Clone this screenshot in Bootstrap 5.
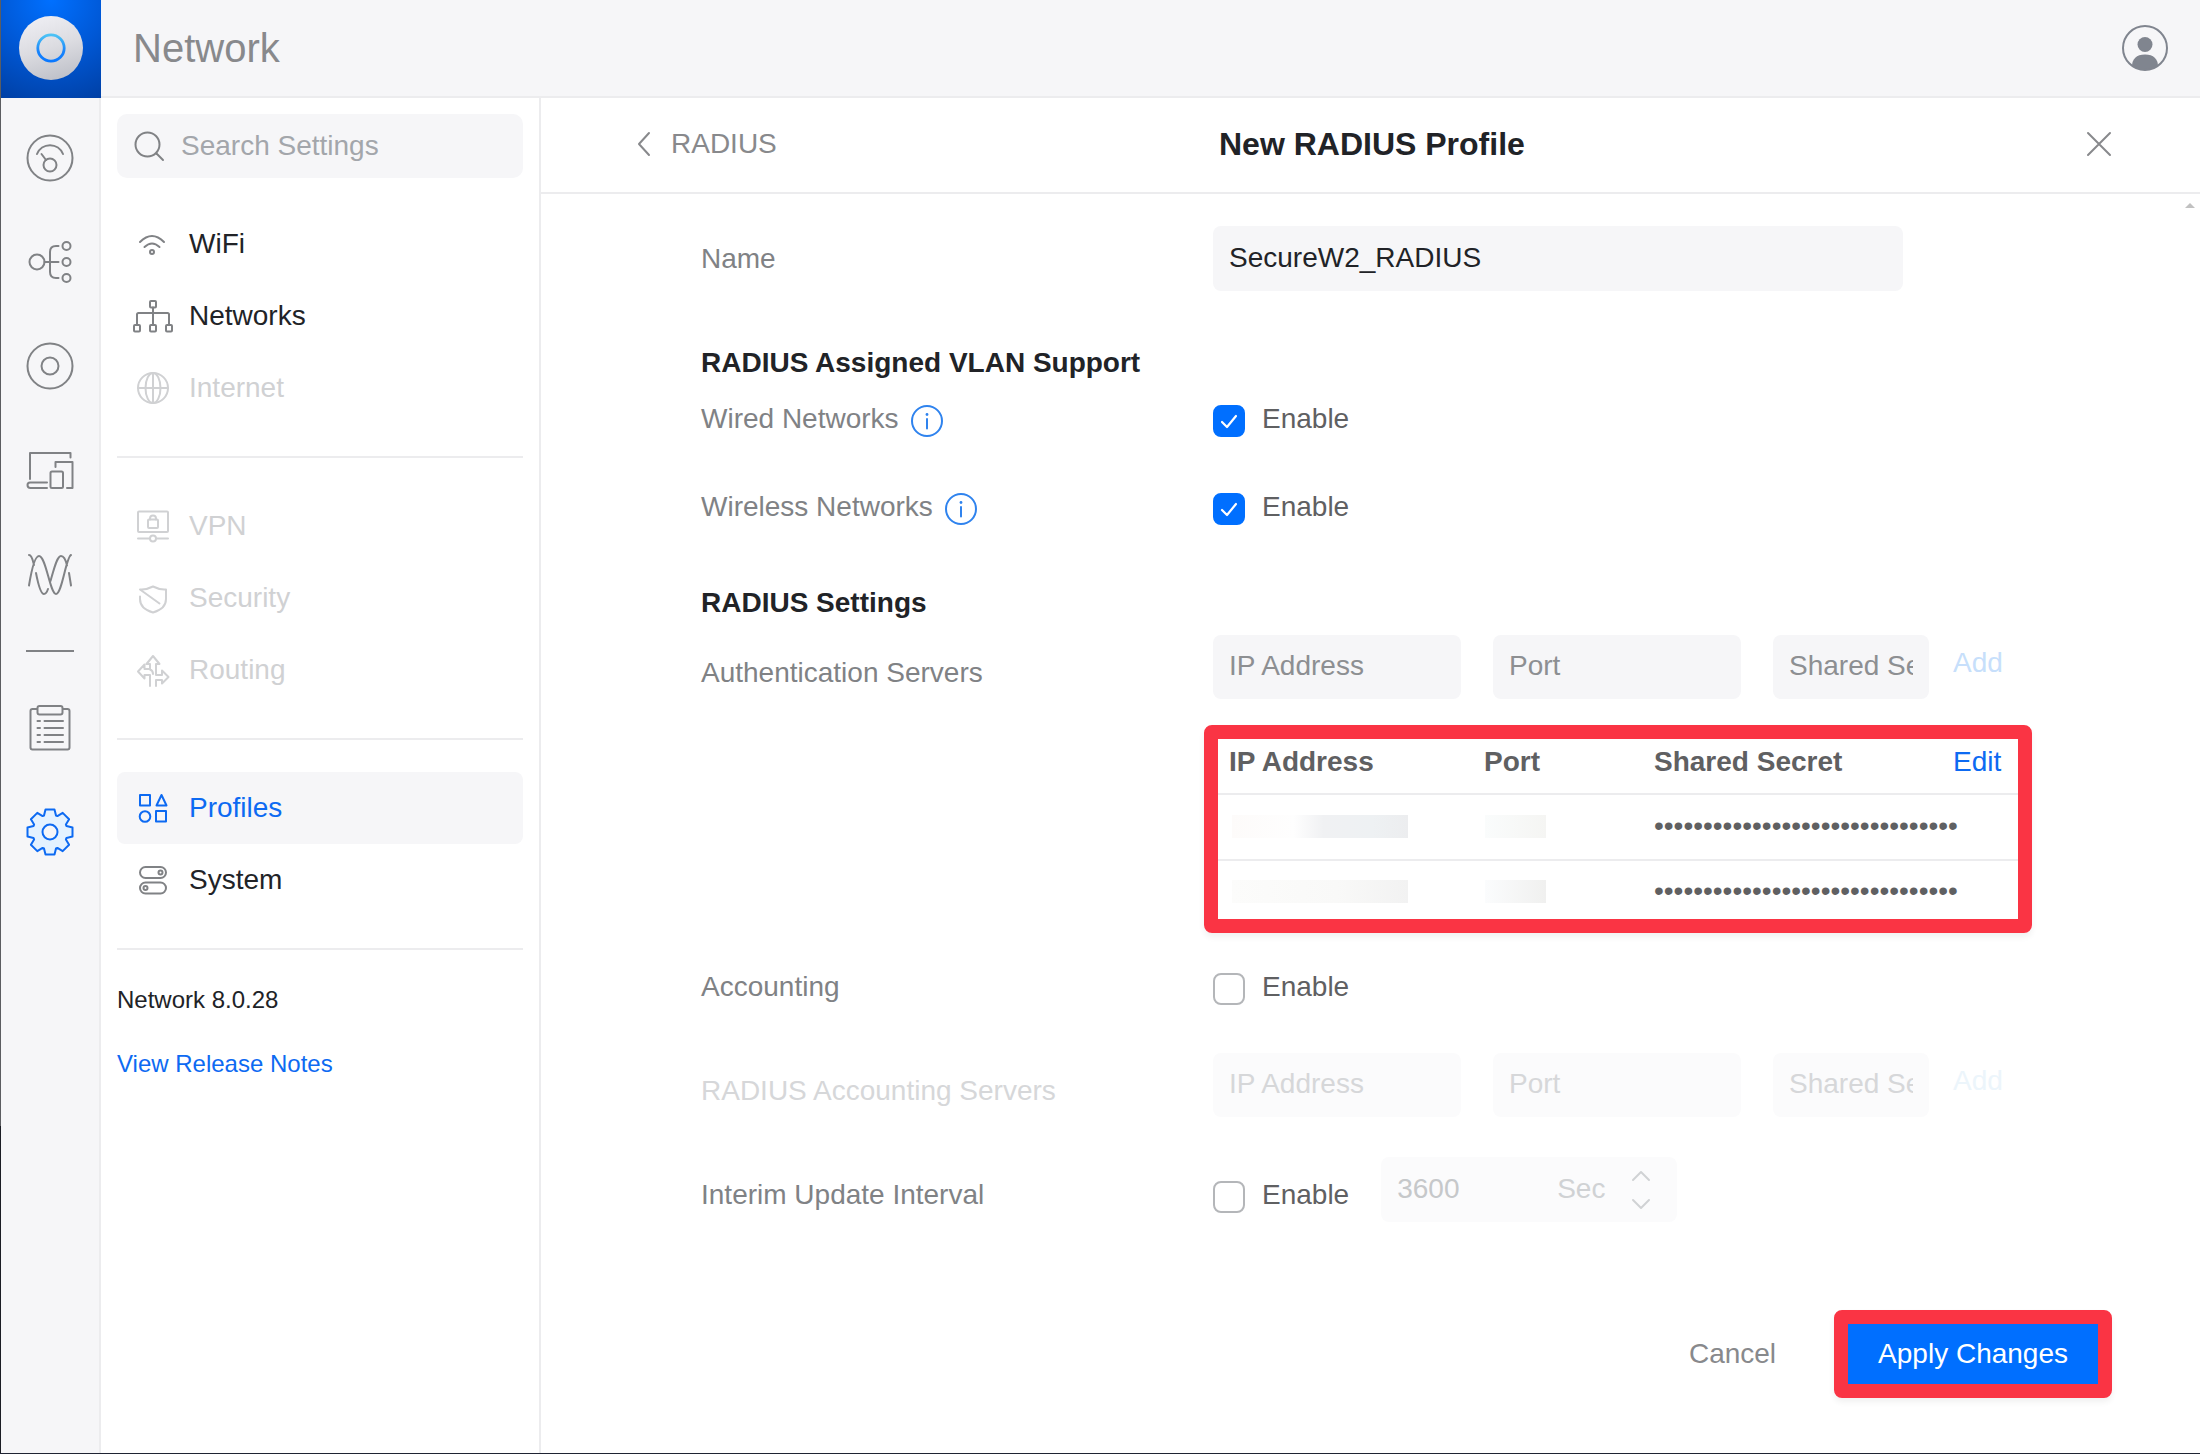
<!DOCTYPE html>
<html lang="en">
<head>
<meta charset="utf-8">
<meta name="viewport" content="width=device-width, initial-scale=1">
<title>Network - New RADIUS Profile</title>
<link href="https://cdn.jsdelivr.net/npm/bootstrap@5.3.0/dist/css/bootstrap.min.css" rel="stylesheet">
<style>
  :root { --ink: #212327; --muted: #808285; --text-2: #5f6062; --faint: #d0d1d3; --accent: #006fff; --link: #0d6af2; --panel: #f6f6f8; --rule: #ececee; --alert: #fa3444; }
  body { font-family: "Liberation Sans", Arial, sans-serif; font-size: 28px; line-height: 32px; color: var(--ink); background: #fff; }
  a { text-decoration: none; }
  svg { fill: none; stroke: currentColor; stroke-width: 2; stroke-linecap: round; stroke-linejoin: round; flex: none; }
  .shell { padding-left: 1px; border-bottom: 1px solid #1f2433; background: linear-gradient(#5c5d61 1126px, #1b1d24 1126px); }

  .rail { flex: 0 0 100px; background: var(--panel); color: var(--muted); }
  .rail-logo { height: 98px; background: radial-gradient(circle at 50% 0, #0070ff, #0058d6 50%, #003b9b 110%); }
  .rail-nav { padding-top: 8px; border-right: 2px solid var(--rule); }
  .rail-nav a { height: 104px; color: inherit; }
  .rail-nav a.active { color: var(--link); }
  .rail-rule { width: 48px; height: 2px; margin: 24px auto; background: var(--muted); }

  .topbar { height: 98px; padding: 0 32px; background: var(--panel); border-bottom: 2px solid var(--rule); }
  .topbar h1 { font-size: 40px; line-height: 40px; color: #88898c; font-weight: 400; }
  .avatar-btn { color: #80858f; }

  .side { flex: 0 0 440px; min-width: 0; padding: 16px; border-right: 2px solid var(--rule); background: #fff; }
  .search-box { height: 64px; padding: 0 16px; gap: 16px; border-radius: 10px; background: var(--panel); color: var(--muted); margin-bottom: 30px; }
  .search-box input { background: none; border: 0; outline: 0; width: 0; min-width: 0; padding: 0; color: var(--ink); }
  .search-box input::placeholder { color: #a3a6ab; }
  .side-link { height: 72px; padding: 0 16px; gap: 16px; border-radius: 8px; color: var(--ink); }
  .side-link svg { color: var(--muted); }
  .side-link.off, .side-link.off svg { color: var(--faint); }
  .side-link.active { background: var(--panel); }
  .side-link.active, .side-link.active svg { color: var(--link); }
  .side-rule { height: 2px; margin: 32px 0; background: var(--rule); }
  .side-foot { font-size: 24px; line-height: 36px; gap: 28px; }
  .text-link { color: var(--link); }

  .page-head { height: 96px; padding: 0 88px 2px 96px; border-bottom: 2px solid var(--rule); }
  .page-head .back { flex: 0 0 582px; gap: 20px; color: #88898c; }
  .page-head h2 { font-size: 32px; line-height: 36px; font-weight: 700; }
  .page-head button { color: #88898c; }

  .page-form { padding: 32px 88px 55px 160px; }
  .scroll-up { position: absolute; top: 9px; right: 5px; border: 5px solid transparent; border-top: 0; border-bottom-color: #c1c1c1; }
  .section-title { font-size: 28px; line-height: 32px; font-weight: 700; margin: 56px 0 0; }
  .section-title.second { margin-top: 62px; }
  .f-row { margin-top: 56px; }
  .section-title + .f-row { margin-top: 26px; }
  .section-title.second + .f-row { margin-top: 16px; }
  .f-row.near { margin-top: 40px; }
  .f-row.mid { margin-top: 48px; }
  .f-label { flex: 0 0 512px; line-height: 28px; color: var(--muted); gap: 12px; }
  .f-label.low, .tick.low { padding-top: 24px; }
  .f-label svg { color: #2f83ee; }
  .f-body { flex: 1 1 0; min-width: 0; max-width: 807px; }
  .field { height: 65px; padding: 0 16px 2px; border: 0; border-radius: 8px; background: var(--panel); font-size: 28px; color: var(--ink); }
  .field::placeholder { color: #8d8f92; }
  .name-field { max-width: 690px; }
  .server { gap: 32px; }
  .server .field { height: 64px; width: 248px; }
  .server .field.secret { width: 156px; }
  .server button { color: #c7dffb; margin-left: -8px; padding-bottom: 8px; }
  .is-off .f-label { color: #d6d7d9; }
  .is-off .field, .stepper { background: #fbfbfc; }
  .is-off .field::placeholder { color: #d6d7d9; }
  .is-off .server button { color: #ecf5fb; }

  .tick { gap: 17px; line-height: 28px; color: var(--text-2); }
  .tick .form-check-input { width: 32px; height: 32px; margin: 0; border: 2px solid #b4b6b9; border-radius: 8px; background-color: #fff; }
  .tick .form-check-input:checked { background-color: var(--accent); border-color: var(--accent); background-size: 32px; background-position: center; background-image: url("data:image/svg+xml,%3csvg xmlns='http://www.w3.org/2000/svg' viewBox='0 0 32 32'%3e%3cpath fill='none' stroke='%23fff' stroke-width='2.2' stroke-linecap='round' stroke-linejoin='round' d='M9 17l5 5 9-11'/%3e%3c/svg%3e"); }
  .stepper { width: 296px; height: 65px; padding: 0 26px 0 16px; border-radius: 8px; color: #d0d2d4; }
  .stepper input { width: 160px; padding: 0 0 2px; border: 0; background: none; color: #c6c8ca; }
  .stepper .unit { flex: 1; padding-bottom: 2px; }

  .callout { border: 14px solid var(--alert); border-radius: 8px; box-shadow: 0 4px 6px rgba(0, 0, 0, .06); }
  .servers-box { width: 828px; margin: 26px 0 0 -9px; }
  .servers-box table { table-layout: fixed; width: 100%; color: var(--text-2); background: #fff; }
  .servers-box th { padding: 7px 0 15px 11px; border-bottom: 2px solid var(--rule); }
  .servers-box td { padding: 15px 0 17px 11px; border-bottom: 2px solid var(--rule); }
  .servers-box tbody tr:last-child td { padding: 14px 0 12px 11px; border-bottom: 0; }
  .redacted { display: block; height: 23px; width: 176px; margin-left: 3px; background: linear-gradient(90deg, #fdfbfa, #fefefe 35%, #f0f1f3 52%, #eef1f3 80%, #ecedef); }
  .redacted.short { width: 61px; margin-left: 1px; background: linear-gradient(90deg, #fafcfc, #f5f5f3); }
  .redacted.pale { background: linear-gradient(90deg, #fcfcfb, #f9f9f8 60%, #f2f2f2); }
  .redacted.pale.short { background: linear-gradient(90deg, #fbfcfd, #f0f0ef); }

  .actions { gap: 58px; padding-top: 88px; }
  .actions .cancel { color: #88898c; }
  .apply { height: 88px; padding: 0 30px; background: var(--accent); color: #fff; background-clip: padding-box; }
  .plain { border: 0; background: none; padding: 0; }
</style>
</head>
<body>
<div class="shell d-flex min-vh-100">

  <nav class="rail d-flex flex-column" aria-label="Application">
    <a href="#" class="rail-logo d-flex align-items-center justify-content-center" aria-label="Home">
      <svg width="66" height="66" viewBox="0 0 66 66">
        <defs>
          <linearGradient id="disc" x1=".3" y1="0" x2=".6" y2="1"><stop offset="0" stop-color="#eeeef3"/><stop offset=".5" stop-color="#dcdce1"/><stop offset="1" stop-color="#bfc1c9"/></linearGradient>
          <linearGradient id="ring" x1="0" y1="0" x2="0" y2="1"><stop offset="0" stop-color="#4cc3f5"/><stop offset=".6" stop-color="#1a86fb"/><stop offset="1" stop-color="#0a78ff"/></linearGradient>
        </defs>
        <circle cx="33" cy="32" r="32" fill="url(#disc)" stroke="none"/>
        <circle cx="33" cy="32" r="13.2" stroke="url(#ring)" stroke-width="2.8"/>
      </svg>
    </a>
    <div class="rail-nav flex-grow-1">
      <a href="#" class="d-flex align-items-center justify-content-center" aria-label="Dashboard"><svg width="56" height="56" viewBox="0 0 56 56"><circle cx="28" cy="28" r="22.5"/><path d="M15 24a14 14 0 0 1 26 0M19.500 24l4.500 6"/><circle cx="28" cy="35" r="6.500"/></svg></a>
      <a href="#" class="d-flex align-items-center justify-content-center" aria-label="Topology"><svg width="56" height="56" viewBox="0 0 56 56"><circle cx="15" cy="28" r="7.500"/><path d="M22.500 28h14M36.500 12H34q-6 0-6 6v20q0 6 6 6h2.500"/><circle cx="44.500" cy="12" r="4"/><circle cx="44.500" cy="28" r="4"/><circle cx="44.500" cy="44" r="4"/></svg></a>
      <a href="#" class="d-flex align-items-center justify-content-center" aria-label="UniFi Devices"><svg width="56" height="56" viewBox="0 0 56 56"><circle cx="28" cy="28" r="22.500"/><circle cx="28" cy="28" r="8.500"/></svg></a>
      <a href="#" class="d-flex align-items-center justify-content-center" aria-label="Client Devices"><svg width="56" height="56" viewBox="0 0 56 56"><path d="M8 37V11h40.500v4.500M25 40.500H8q-2.500 0-2.500 2.500 0 3 3 3H25M33.500 25v-5H50.500v26H45"/><rect x="28.500" y="29.500" width="12.500" height="16.500" rx="1.500"/></svg></a>
      <a href="#" class="d-flex align-items-center justify-content-center" aria-label="Radios"><svg width="56" height="56" viewBox="0 0 56 56"><path d="M7 39.500C10 21 13 10 17 10c7 0 11 38 17 38 6 0 10-37 15-39M7 9c3 0 4 6 5 10M14 27c2.500 13 5 21 8 21 1.500 0 3-2 4-5M28.500 35C32 23 35 10 39 10c3.500 0 5 5 6 9.500M47 27l2 12.500"/></svg></a>
      <div class="rail-rule"></div>
      <a href="#" class="d-flex align-items-center justify-content-center" aria-label="System Log"><svg width="56" height="56" viewBox="0 0 56 56"><path d="M15 9h-4.500Q8.500 9 8.500 11v36.500q0 2 2 2h35q2 0 2-2V11q0-2-2-2H41M15.500 21H18M22.500 21H41M15.500 28H18M22.500 28H41M15.500 35H18M22.500 35H41M15.500 42H18M22.500 42H41"/><rect x="15.500" y="6" width="25" height="8.500" rx="2"/></svg></a>
      <a href="#" class="active d-flex align-items-center justify-content-center" aria-label="Settings"><svg width="56" height="56" viewBox="0 0 56 56"><path fill="#e4f2ff" d="M22 11.500L23.500 5.500H32.500L34 11.500 35.400 12.100 40.700 8.900 47.100 15.300 43.900 20.600 44.500 22 50.500 23.500V32.500L44.500 34 43.900 35.400 47.100 40.700 40.700 47.100 35.400 43.900 34 44.500 32.500 50.500H23.500L22 44.500 20.600 43.900 15.300 47.100 8.900 40.700 12.100 35.400 11.500 34 5.500 32.500V23.500L11.500 22 12.100 20.600 8.900 15.300 15.300 8.900 20.600 12.100Z"/><circle cx="28" cy="28" r="7.500" fill="#f6f6f8"/></svg></a>
    </div>
  </nav>

  <div class="d-flex flex-column flex-grow-1 bg-white">
    <header class="topbar d-flex align-items-center justify-content-between">
      <h1 class="m-0">Network</h1>
      <button type="button" class="plain avatar-btn" aria-label="Account">
        <svg width="46" height="46" viewBox="0 0 46 46"><clipPath id="face"><circle cx="23" cy="23" r="22"/></clipPath><circle cx="23" cy="19.500" r="7.500" fill="currentColor" stroke="none"/><path clip-path="url(#face)" d="M10 46V42q0-12.500 13-12.500T36 42v4z" fill="currentColor" stroke="none"/><circle cx="23" cy="23" r="22"/></svg>
      </button>
    </header>

    <div class="d-flex flex-grow-1">
      <aside class="side">
        <div class="search-box d-flex align-items-center">
          <label for="q" aria-label="Search Settings" class="d-flex"><svg width="32" height="32" viewBox="0 0 32 32"><circle cx="14.500" cy="14.500" r="12"/><path d="M23.500 23.500L30 30"/></svg></label>
          <input id="q" type="text" class="flex-grow-1" placeholder="Search Settings">
        </div>
        <nav class="d-flex flex-column" aria-label="Settings">
          <a href="#" class="side-link d-flex align-items-center"><svg width="40" height="40" viewBox="0 0 40 40"><path d="M7 18q12-12 24 0M11.500 23q7.500-7 15 0"/><circle cx="19" cy="28" r="2"/></svg>WiFi</a>
          <a href="#" class="side-link d-flex align-items-center"><svg width="40" height="40" viewBox="0 0 40 40"><rect x="17" y="5" width="6" height="6.500" rx="1"/><path d="M20 11.500v17.500M4 29V18.500q0-1.500 1.500-1.500h29Q36 17 36 18.500v10.500"/><rect x="1" y="29" width="6" height="6.500" rx="1"/><rect x="17" y="29" width="6" height="6.500" rx="1"/><rect x="33" y="29" width="6" height="6.500" rx="1"/></svg>Networks</a>
          <a href="#" class="side-link off d-flex align-items-center"><svg width="40" height="40" viewBox="0 0 40 40"><circle cx="20" cy="20" r="15"/><ellipse cx="20" cy="20" rx="7.500" ry="15"/><path d="M20 5v30M5 20h30"/></svg>Internet</a>
          <div class="side-rule"></div>
          <a href="#" class="side-link off d-flex align-items-center"><svg width="40" height="40" viewBox="0 0 40 40"><rect x="5" y="5.500" width="30" height="20.500" rx="1"/><rect x="15" y="13.500" width="10" height="8.500" rx="1"/><path d="M17 13.500v-1q0-3 3-3t3 3v1M5 32.500h12M23 32.500h12"/><circle cx="20" cy="32.500" r="3"/></svg>VPN</a>
          <a href="#" class="side-link off d-flex align-items-center"><svg width="40" height="40" viewBox="0 0 40 40"><path d="M7 18.500v2.500c0 7 6 11.500 13 13.500 7-2 13-6.500 13-13.500V11.500c-5 .500-9-1-13-3-4 2-8 3.500-13 3L26.500 25.500"/></svg>Security</a>
          <a href="#" class="side-link off d-flex align-items-center"><svg width="40" height="40" viewBox="0 0 40 40"><path d="M17 36V25h-5.500v3.500L5 21.500l6.500-7V19H17v-5h-3.500l6.500-8 6.500 8H23v11h6v-4.500l6.500 6.500-6.500 6.500V30h-6v6M17 19.500q3 1 3 4.500"/></svg>Routing</a>
          <div class="side-rule"></div>
          <a href="#" class="side-link active d-flex align-items-center" aria-current="page"><svg width="40" height="40" viewBox="0 0 40 40"><rect x="7" y="7" width="10" height="10.500"/><path d="M28.500 7l5 10.500h-10z"/><circle cx="12" cy="28.500" r="5.300"/><rect x="23" y="23" width="10" height="10.500"/></svg>Profiles</a>
          <a href="#" class="side-link d-flex align-items-center"><svg width="40" height="40" viewBox="0 0 40 40"><rect x="7" y="7" width="26" height="11" rx="5.500"/><rect x="7" y="22.500" width="26" height="11" rx="5.500"/><circle cx="27.500" cy="12.500" r="2"/><circle cx="12.500" cy="28" r="2"/></svg>System</a>
          <div class="side-rule"></div>
        </nav>
        <div class="side-foot d-flex flex-column">
          <span>Network 8.0.28</span>
          <a href="#" class="text-link">View Release Notes</a>
        </div>
      </aside>

      <main class="d-flex flex-column flex-grow-1">
        <div class="page-head d-flex align-items-center">
          <a href="#" class="back d-flex align-items-center"><svg width="14" height="26" viewBox="0 0 14 26"><path d="M12 2L2 13l10 11"/></svg>RADIUS</a>
          <h2 class="m-0">New RADIUS Profile</h2>
          <button type="button" class="plain ms-auto d-flex" aria-label="Close"><svg width="26" height="26" viewBox="0 0 26 26"><path d="M2 2l22 22M24 2L2 24"/></svg></button>
        </div>

        <form class="page-form position-relative flex-grow-1 d-flex flex-column">
          <span class="scroll-up"></span>
          <div class="d-flex align-items-center">
            <label class="f-label" for="pname">Name</label>
            <div class="f-body"><input id="pname" type="text" class="form-control field name-field" value="SecureW2_RADIUS"></div>
          </div>

          <h3 class="section-title">RADIUS Assigned VLAN Support</h3>
          <div class="f-row d-flex align-items-start">
            <div class="f-label d-flex">Wired Networks<svg width="32" height="32" viewBox="0 0 32 32"><circle cx="16" cy="16" r="15"/><path d="M16 14v9.500"/><path d="M16 9.500v.1" stroke-width="2.800"/></svg></div>
            <div class="tick d-flex"><input id="wired" type="checkbox" class="form-check-input" checked><label for="wired">Enable</label></div>
          </div>
          <div class="f-row d-flex align-items-start">
            <div class="f-label d-flex">Wireless Networks<svg width="32" height="32" viewBox="0 0 32 32"><circle cx="16" cy="16" r="15"/><path d="M16 14v9.500"/><path d="M16 9.500v.1" stroke-width="2.800"/></svg></div>
            <div class="tick d-flex"><input id="wireless" type="checkbox" class="form-check-input" checked><label for="wireless">Enable</label></div>
          </div>

          <h3 class="section-title second">RADIUS Settings</h3>
          <div class="f-row d-flex align-items-start">
            <div class="f-label low">Authentication Servers</div>
            <div class="f-body">
              <div class="server d-flex align-items-center">
                <input type="text" class="form-control field" placeholder="IP Address" aria-label="IP Address">
                <input type="text" class="form-control field" placeholder="Port" aria-label="Port">
                <input type="text" class="form-control field secret" placeholder="Shared Secret" aria-label="Shared Secret">
                <button type="button" class="plain">Add</button>
              </div>
              <div class="callout servers-box">
                <table>
                  <colgroup><col style="width:255px"><col style="width:170px"><col style="width:299px"><col></colgroup>
                  <thead><tr><th>IP Address</th><th>Port</th><th>Shared Secret</th><th class="fw-normal"><a href="#" class="text-link">Edit</a></th></tr></thead>
                  <tbody>
                    <tr><td><span class="redacted"></span></td><td><span class="redacted short"></span></td><td colspan="2">•••••••••••••••••••••••••••••••</td></tr>
                    <tr><td><span class="redacted pale"></span></td><td><span class="redacted pale short"></span></td><td colspan="2">•••••••••••••••••••••••••••••••</td></tr>
                  </tbody>
                </table>
              </div>
            </div>
          </div>

          <div class="f-row near d-flex align-items-start">
            <div class="f-label">Accounting</div>
            <div class="tick d-flex"><input id="acct" type="checkbox" class="form-check-input"><label for="acct">Enable</label></div>
          </div>
          <div class="f-row mid is-off d-flex align-items-start">
            <div class="f-label low">RADIUS Accounting Servers</div>
            <div class="f-body">
              <div class="server d-flex align-items-center">
                <input type="text" class="form-control field" placeholder="IP Address" aria-label="Accounting IP Address" disabled>
                <input type="text" class="form-control field" placeholder="Port" aria-label="Accounting Port" disabled>
                <input type="text" class="form-control field secret" placeholder="Shared Secret" aria-label="Accounting Shared Secret" disabled>
                <button type="button" class="plain" disabled>Add</button>
              </div>
            </div>
          </div>
          <div class="f-row near d-flex align-items-start">
            <div class="f-label low">Interim Update Interval</div>
            <div class="f-body d-flex gap-4 align-items-start">
              <div class="tick low d-flex"><input id="interim" type="checkbox" class="form-check-input"><label for="interim">Enable</label></div>
              <div class="stepper d-flex align-items-center ms-2">
                <input type="text" value="3600" aria-label="Interval" disabled>
                <span class="unit">Sec</span>
                <svg width="20" height="44" viewBox="0 0 20 44" stroke-width="1.500"><path d="M2 12l8-8 8 8M2 32l8 8 8-8"/></svg>
              </div>
            </div>
          </div>

          <div class="actions d-flex align-items-center justify-content-end mt-auto">
            <button type="button" class="plain cancel">Cancel</button>
            <button type="submit" class="callout apply">Apply Changes</button>
          </div>
        </form>
      </main>
    </div>
  </div>
</div>
<script src="https://cdn.jsdelivr.net/npm/bootstrap@5.3.0/dist/js/bootstrap.bundle.min.js"></script>
</body>
</html>
